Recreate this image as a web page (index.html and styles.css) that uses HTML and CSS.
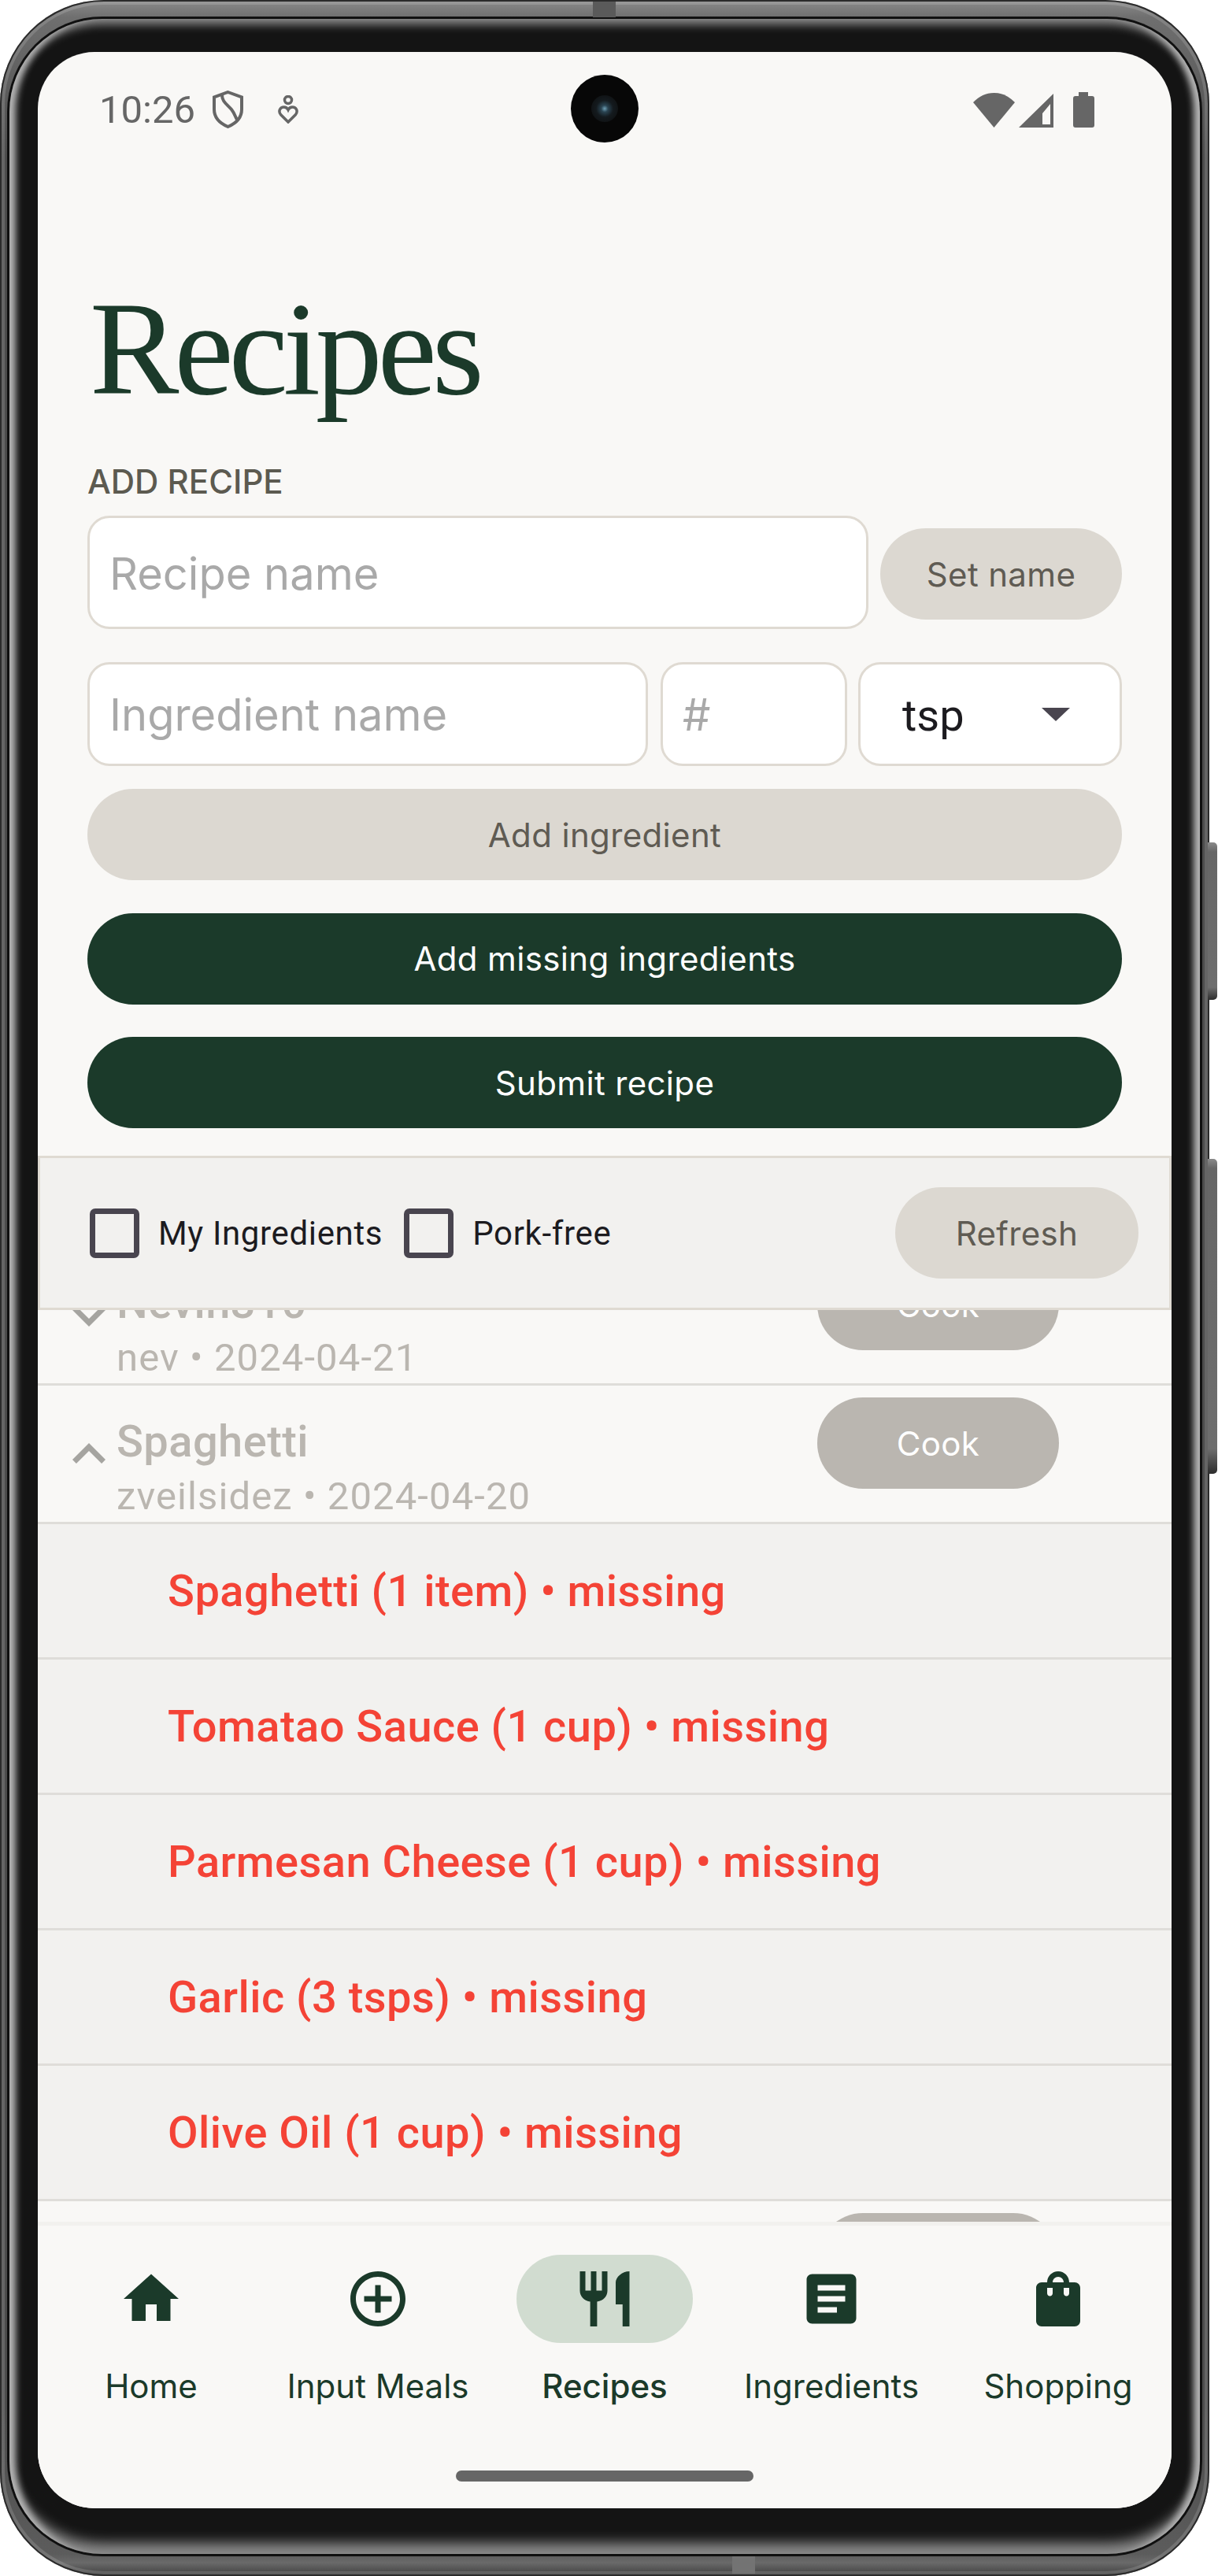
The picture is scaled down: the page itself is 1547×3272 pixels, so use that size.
FILE: index.html
```html
<!DOCTYPE html>
<html lang="en">
<head>
    <meta charset="UTF-8">
    <meta name="viewport" content="width=device-width, initial-scale=1.0">
    <title>Recipes</title>
    <link rel="stylesheet" href="styles.css">
</head>
<body>
    <div class="phone">
        <div class="nub nub-top"></div>
        <div class="nub nub-bottom"></div>
        <div class="side-key side-key-power"></div>
        <div class="side-key side-key-volume"></div>

        <div class="bezel">
            <div class="screen">
                <div class="status-bar">
                    <span class="clock">10:26</span>
                    <svg class="shield" viewBox="0 0 39 48"><path d="M19.5 2 37 8.5V24c0 10-7 17.500-17.500 22C9 41.500 2 34 2 24V8.500z"/><path d="M12 6c0 8 6 11 12 18 4 5 5 10 8 15"/></svg>
                    <svg class="person" viewBox="0 0 26 36"><circle cx="13" cy="6" r="4.500"/><path d="M13 34 3.500 24.500C0 20 3 15 7.500 15c2.500 0 4.500 1.500 5.500 3.500 1-2 3-3.500 5.500-3.500 4.500 0 7.500 5 4 9.500z"/></svg>
                    <div class="camera"><div class="lens"></div></div>
                    <div class="status-right">
                        <svg class="wifi" viewBox="0 0 53 44"><path d="M26.500 44 0 12C8 4 16 0 26.500 0S45 4 53 12z"/></svg>
                        <svg class="signal" viewBox="0 0 44 43"><path fill-rule="evenodd" d="M44 0v43H0zM40 13 30 25v14h10z"/></svg>
                        <svg class="battery" viewBox="0 0 27 45"><path d="M7 0h12v5h5c2 0 3 1 3 3v34c0 2-1 3-3 3H3c-2 0-3-1-3-3V8c0-2 1-3 3-3h4z"/></svg>
                    </div>
                </div>

                <h1 class="page-title">Recipes</h1>

                <div class="add-form">
                    <div class="form-label">ADD RECIPE</div>
                    <div class="name-row">
                        <input class="field field-name" type="text" placeholder="Recipe name">
                        <button class="btn btn-soft btn-set">Set name</button>
                    </div>
                    <div class="ingredient-row">
                        <input class="field field-ingredient" type="text" placeholder="Ingredient name">
                        <input class="field field-qty" type="text" placeholder="#">
                        <div class="unit-select">
                            <span>tsp</span>
                            <svg class="unit-arrow" viewBox="0 0 36 17"><path d="M0 0h36L18 17z"/></svg>
                        </div>
                    </div>
                    <button class="btn btn-soft btn-wide">Add ingredient</button>
                    <button class="btn btn-dark btn-wide">Add missing ingredients</button>
                    <button class="btn btn-dark btn-wide">Submit recipe</button>
                </div>

                <div class="filter-bar">
                    <span class="check"></span>
                    <span class="check-label">My Ingredients</span>
                    <span class="check"></span>
                    <span class="check-label">Pork-free</span>
                    <button class="btn btn-soft btn-refresh">Refresh</button>
                </div>

                <div class="recipe-list">
                    <div class="recipe-list-inner">
                        <div class="recipe">
                            <svg class="chevron" viewBox="0 0 24 24"><path d="M16.590 8.590 12 13.170 7.410 8.590 6 10l6 6 6-6z"/></svg>
                            <div class="recipe-text">
                                <div class="recipe-name">Nevin310</div>
                                <div class="recipe-meta">nev • 2024-04-21</div>
                            </div>
                            <button class="btn btn-cook">Cook</button>
                        </div>
                        <div class="recipe">
                            <svg class="chevron" viewBox="0 0 24 24"><path d="M12 8l-6 6 1.410 1.410L12 10.830l4.590 4.580L18 14z"/></svg>
                            <div class="recipe-text">
                                <div class="recipe-name">Spaghetti</div>
                                <div class="recipe-meta">zveilsidez • 2024-04-20</div>
                            </div>
                            <button class="btn btn-cook">Cook</button>
                        </div>
                        <div class="ingredient">Spaghetti (1 item) • missing</div>
                        <div class="ingredient">Tomatao Sauce (1 cup) • missing</div>
                        <div class="ingredient">Parmesan Cheese (1 cup) • missing</div>
                        <div class="ingredient">Garlic (3 tsps) • missing</div>
                        <div class="ingredient">Olive Oil (1 cup) • missing</div>
                        <div class="recipe">
                            <div class="recipe-text"></div>
                            <button class="btn btn-cook"></button>
                        </div>
                    </div>
                </div>

                <div class="bottom-nav">
                    <div class="nav-items">
                        <div class="nav-item">
                            <div class="nav-pill"><svg viewBox="0 0 24 24"><path d="M10 20v-6h4v6h5v-8h3L12 3 2 12h3v8z"/></svg></div>
                            <span>Home</span>
                        </div>
                        <div class="nav-item">
                            <div class="nav-pill"><svg viewBox="0 0 24 24"><path d="M13 7h-2v4H7v2h4v4h2v-4h4v-2h-4V7zm-1-5C6.480 2 2 6.480 2 12s4.480 10 10 10 10-4.480 10-10S17.520 2 12 2zm0 18c-4.410 0-8-3.590-8-8s3.590-8 8-8 8 3.590 8 8-3.590 8-8 8z"/></svg></div>
                            <span>Input Meals</span>
                        </div>
                        <div class="nav-item active">
                            <div class="nav-pill"><svg viewBox="0 0 24 24"><path d="M11 9H9V2H7v7H5V2H3v7c0 2.120 1.660 3.840 3.750 3.970V22h2.500v-9.030C11.340 12.840 13 11.120 13 9V2h-2v7zm5-3v8h2.500v8H21V2c-2.760 0-5 2.240-5 4z"/></svg></div>
                            <span>Recipes</span>
                        </div>
                        <div class="nav-item">
                            <div class="nav-pill"><svg viewBox="0 0 24 24"><path d="M19 3H5c-1.100 0-2 .9-2 2v14c0 1.100.9 2 2 2h14c1.100 0 2-.9 2-2V5c0-1.100-.9-2-2-2zm-5 14H7v-2h7v2zm3-4H7v-2h10v2zm0-4H7V7h10v2z"/></svg></div>
                            <span>Ingredients</span>
                        </div>
                        <div class="nav-item">
                            <div class="nav-pill"><svg viewBox="0 0 24 24"><path fill-rule="evenodd" d="M18 6h-2c0-2.210-1.790-4-4-4S8 3.790 8 6H6c-1.100 0-2 .9-2 2v12c0 1.100.9 2 2 2h12c1.100 0 2-.9 2-2V8c0-1.100-.9-2-2-2zM10 10c0 .55-.45 1-1 1s-1-.45-1-1V8h2v2zm2-6c1.100 0 2 .9 2 2h-4c0-1.100.9-2 2-2zm4 6c0 .55-.45 1-1 1s-1-.45-1-1V8h2v2z"/></svg></div>
                            <span>Shopping</span>
                        </div>
                    </div>
                    <div class="home-bar"></div>
                </div>
            </div>
        </div>
    </div>
</body>
</html>
```

FILE: styles.css
```css
* {
    box-sizing: border-box;
}

body {
    margin: 0;
    background: #fff;
    font-family: 'Inter', 'Noto Sans', sans-serif;
}

/* device frame */
.phone {
    position: relative;
    width: 1536px;
    height: 3272px;
    padding: 24px 12px 28px;
    border-radius: 132px;
    background: linear-gradient(180deg, #8b8b8b 0, #6f6f6f 22px, #4c4c4c 200px, #4c4c4c 3060px, #5c5c5c 3244px, #6a6a6a 3255px, #3e3e3e 3272px);
    box-shadow: inset 0 0 0 2px #2b2b2b, inset 0 0 0 6px rgba(255, 255, 255, 0.14);
}

.nub {
    position: absolute;
    width: 29px;
    background: #5a5a5a;
}

.nub-top {
    top: 2px;
    left: 753px;
    height: 20px;
}

.nub-bottom {
    bottom: 3px;
    left: 930px;
    height: 22px;
    background: #737373;
}

.side-key {
    position: absolute;
    left: 1534px;
    width: 12px;
    border-radius: 0 5px 5px 0;
    background: linear-gradient(180deg, #8a8a8a 0, #666 12px, #6e6e6e 92%, #2d2d2d 100%);
}

.side-key-power {
    top: 1070px;
    height: 200px;
}

.side-key-volume {
    top: 1472px;
    height: 400px;
}

.bezel {
    height: 100%;
    padding: 42px 36px 58px;
    border-radius: 118px;
    background: #141414;
    box-shadow: 0 0 0 3px #101010, inset 15px 0 9px -7px #b5b5b5, inset -15px 0 9px -7px #b5b5b5, inset 0 15px 12px -8px #8a8a8a, inset 0 -22px 16px -8px #8a8a8a;
}

.screen {
    position: relative;
    display: flex;
    flex-direction: column;
    height: 3120px;
    overflow: hidden;
    border-radius: 72px;
    background: #f9f8f6;
}

/* status bar */
.status-bar {
    position: relative;
    display: flex;
    align-items: center;
    flex: none;
    height: 146px;
    padding: 0 98px 0 78px;
}

.status-bar svg {
    display: block;
    fill: #666;
}

.clock {
    font-family: 'Roboto', sans-serif;
    font-size: 49px;
    color: #666;
}

.shield {
    width: 39px;
    height: 48px;
    margin-left: 22px;
}

.status-bar .shield path,
.status-bar .person circle,
.status-bar .person path {
    fill: none;
    stroke: #666;
    stroke-width: 4;
}

.status-bar .person circle,
.status-bar .person path {
    stroke-width: 3.5;
}

.person {
    width: 26px;
    height: 36px;
    margin-left: 44px;
}

.camera {
    position: absolute;
    top: 29px;
    left: 677px;
    display: flex;
    align-items: center;
    justify-content: center;
    width: 86px;
    height: 86px;
    border-radius: 50%;
    background: #070707;
}

.lens {
    width: 34px;
    height: 34px;
    border-radius: 50%;
    background: radial-gradient(circle, #6f9fb5 0, #2a4452 18%, #141a1e 45%, #0c0c0c 100%);
}

.status-right {
    display: flex;
    align-items: flex-end;
    margin-left: auto;
}

.wifi {
    width: 53px;
    height: 44px;
}

.signal {
    width: 44px;
    height: 43px;
    margin-left: 5px;
}

.battery {
    width: 27px;
    height: 45px;
    margin-left: 25px;
}

/* header and form */
.page-title {
    flex: none;
    margin: 131px 0 0 66px;
    font-family: 'Liberation Serif', serif;
    font-size: 170px;
    font-weight: 400;
    line-height: 200px;
    letter-spacing: -6.200px;
    color: #1b3a2a;
}

.add-form {
    flex: none;
    height: 925px;
    padding: 43px 63px 0;
}

.form-label {
    margin-bottom: 17px;
    font-size: 42px;
    font-weight: 500;
    line-height: 52px;
    color: #5c5a50;
}

.name-row {
    display: flex;
    align-items: center;
    gap: 15px;
    margin-bottom: 42px;
}

.ingredient-row {
    display: flex;
    margin-bottom: 29px;
}

.field {
    min-width: 0;
    padding: 2px 25px 0;
    border: 3.5px solid #dfdad2;
    border-radius: 28px;
    background: #fff;
    font-family: inherit;
    font-size: 56px;
    outline: none;
}

.field::placeholder {
    color: #a9a9a9;
    opacity: 1;
}

.field-name {
    flex: 1;
    height: 144px;
    padding-top: 4px;
}

.field-ingredient {
    width: 712px;
    height: 132px;
}

.field-qty {
    width: 237px;
    height: 132px;
    margin-left: 16px;
}

.unit-select {
    display: flex;
    align-items: center;
    justify-content: space-between;
    width: 335px;
    height: 132px;
    margin-left: 14px;
    padding: 4px 63px 0 53px;
    border: 3.5px solid #dfdad2;
    border-radius: 28px;
    background: #fff;
    font-family: 'Roboto', sans-serif;
    font-size: 56px;
    color: #1c1b1f;
}

.unit-arrow {
    width: 36px;
    height: 17px;
    margin-top: -4px;
    fill: #49454f;
}

.btn {
    display: block;
    height: 116px;
    padding: 0;
    border: none;
    border-radius: 58px;
    font-family: 'Inter', 'Noto Sans', sans-serif;
    font-size: 42px;
    letter-spacing: 0.35px;
}

.btn-soft {
    background: #dcd8d1;
    color: #5f5b53;
}

.btn-dark {
    margin-top: 41.500px;
    background: #1b3a2a;
    color: #fff;
}

.btn-set {
    flex: none;
    width: 307px;
    margin-top: 4px;
}

.btn-wide {
    width: 100%;
}

/* filters */
.filter-bar {
    display: flex;
    align-items: center;
    flex: none;
    height: 196px;
    padding: 0 39px 0 63px;
    border: 3.5px solid #dfdad2;
    background: #f2f1ef;
    font-family: 'Roboto', sans-serif;
    font-size: 42px;
    letter-spacing: 0.65px;
    color: #1c1b1f;
}

.check {
    flex: none;
    width: 63px;
    height: 63px;
    border: 7px solid #49454f;
    border-radius: 7px;
}

.check-label {
    margin: 0 27px 0 24px;
}

.btn-refresh {
    flex: none;
    width: 309px;
    margin-left: auto;
}

/* recipes */
.recipe-list {
    flex: 1;
    min-height: 0;
    overflow: hidden;
}

.recipe-list-inner {
    margin-top: -80px;
}

.recipe {
    position: relative;
    display: flex;
    align-items: center;
    height: 176px;
    padding: 0 143px 0 23px;
    border-bottom: 3.5px solid #dfddd9;
}

.chevron {
    flex: none;
    width: 84px;
    height: 84px;
    margin-right: -7px;
    fill: #a5a4a0;
}

.recipe-text {
    flex: 1;
    align-self: flex-start;
    padding-top: 37px;
    font-family: 'Roboto', sans-serif;
    color: #bab6b0;
}

.recipe-name {
    font-size: 56px;
    font-weight: 500;
    line-height: 68px;
    letter-spacing: 0.45px;
}

.recipe-meta {
    font-size: 49px;
    line-height: 72px;
    letter-spacing: 1.100px;
}

.btn-cook {
    flex: none;
    align-self: flex-start;
    width: 307px;
    margin-top: 15px;
    background: #bab6b0;
    color: #fff;
}

.ingredient {
    display: flex;
    align-items: center;
    height: 172px;
    padding-left: 165px;
    border-bottom: 3.5px solid #dfddd9;
    background: #f2f1ef;
    font-family: 'Roboto', sans-serif;
    font-size: 56px;
    font-weight: 500;
    letter-spacing: 0.47px;
    color: #f44336;
}

/* bottom navigation */
.bottom-nav {
    flex: none;
    height: 364px;
    padding-top: 37px;
    border-top: 5px solid #f2f1ee;
    background: #f9f8f6;
}

.nav-items {
    display: flex;
}

.nav-item {
    display: flex;
    flex: 1;
    flex-direction: column;
    align-items: center;
    font-size: 42px;
    line-height: 52px;
    color: #1b3a2a;
}

.nav-pill {
    display: flex;
    align-items: center;
    justify-content: center;
    width: 224px;
    height: 112px;
    margin-bottom: 29px;
    border-radius: 56px;
}

.nav-pill svg {
    width: 84px;
    height: 84px;
    fill: #1b3a2a;
}

.active .nav-pill {
    background: #d1dcd0;
}

.active span {
    font-weight: 500;
}

.home-bar {
    width: 378px;
    height: 14px;
    margin: 81px auto 0;
    border-radius: 7px;
    background: #666;
}
```
